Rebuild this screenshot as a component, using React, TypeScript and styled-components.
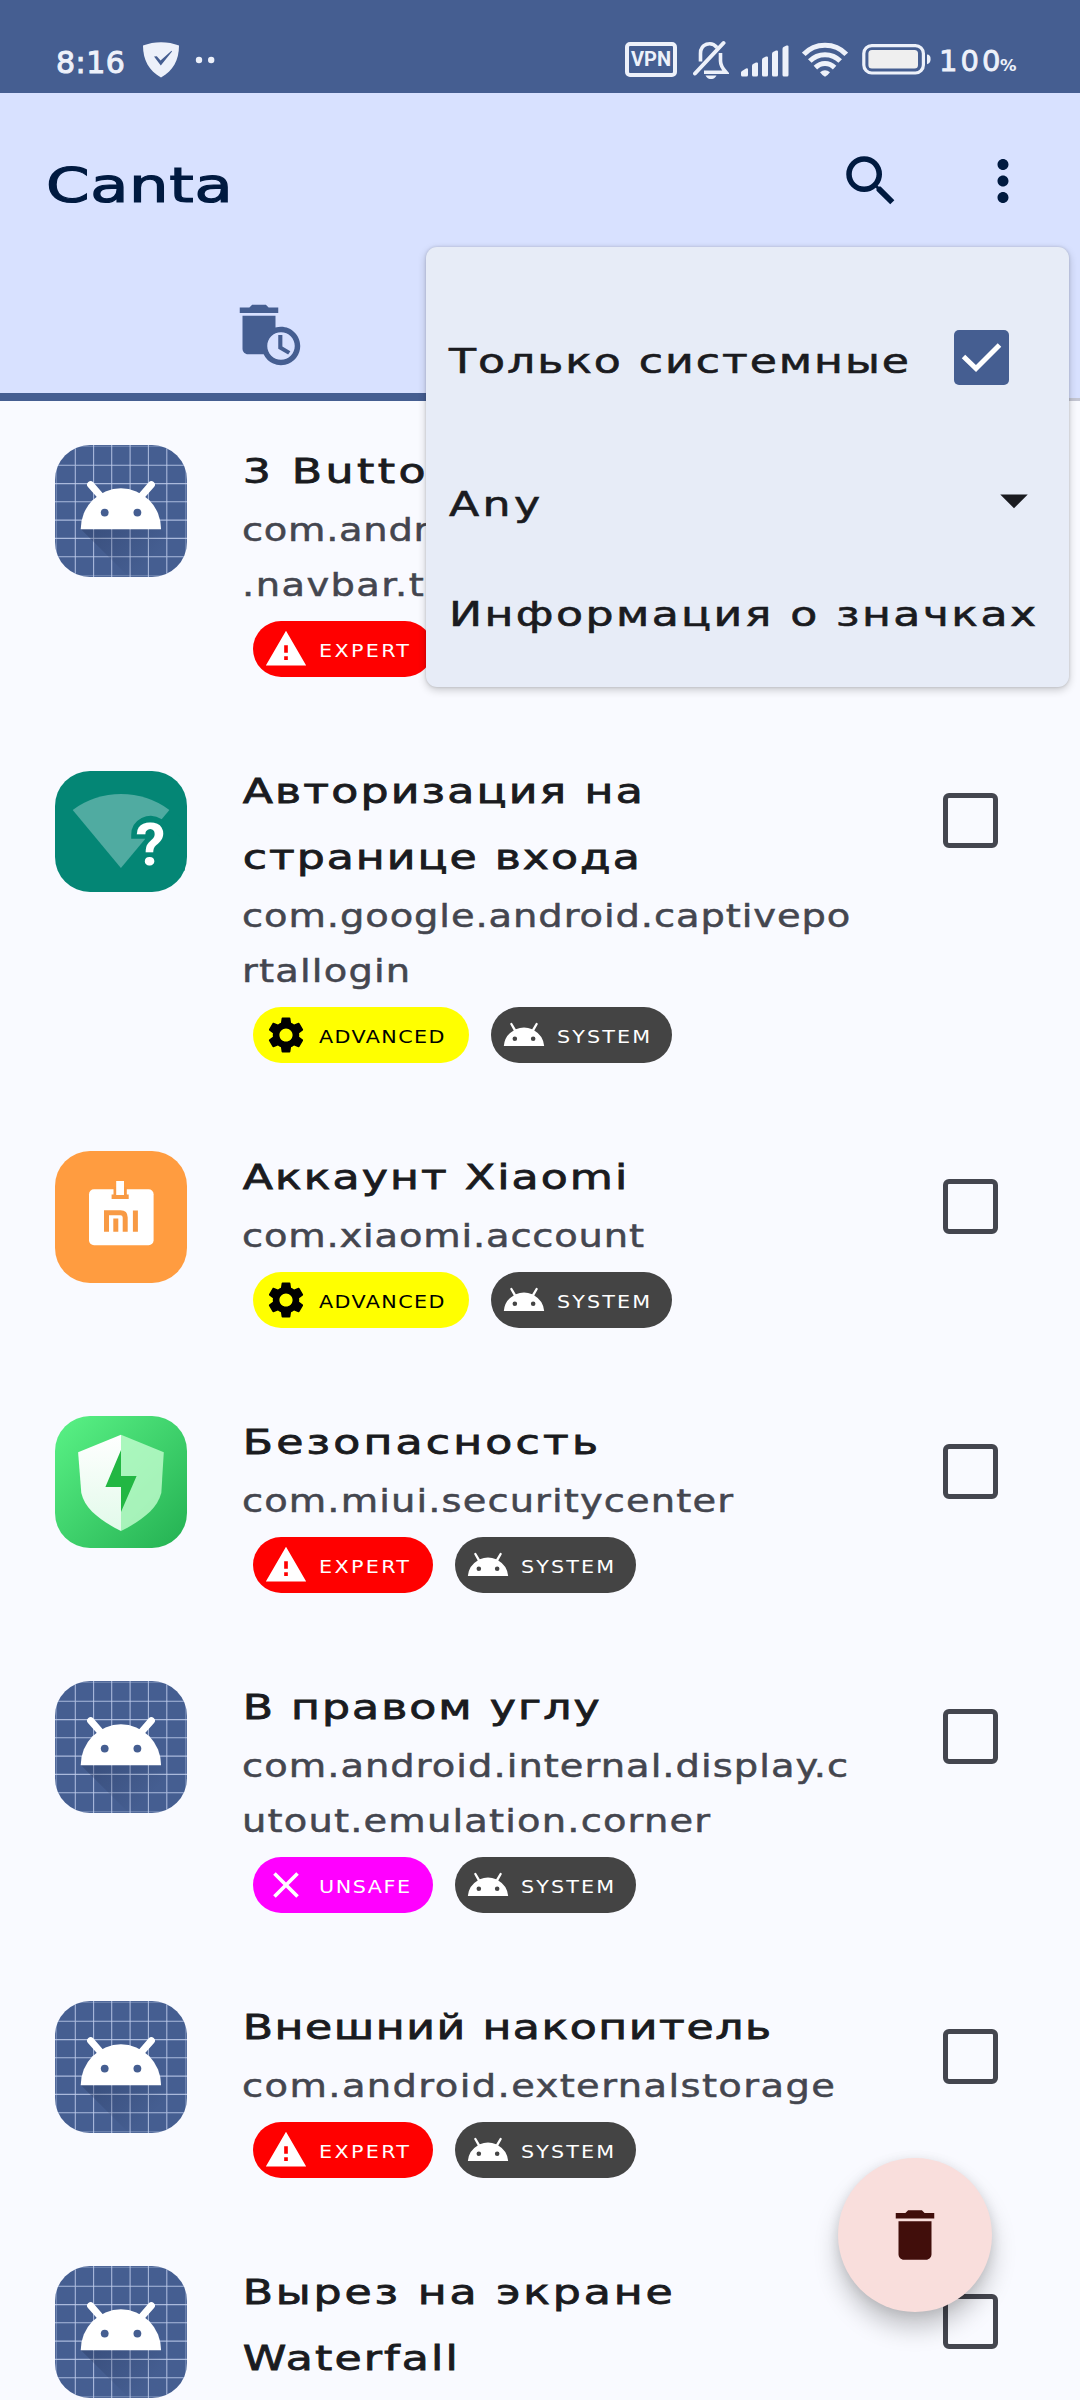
import React from 'react';
import styled, { createGlobalStyle } from 'styled-components';
import {
  MdAndroid,
  MdArrowDropDown,
  MdAutoDelete,
  MdClose,
  MdDelete,
  MdMoreVert,
  MdSearch,
  MdSettings,
  MdWarning,
} from 'react-icons/md';

const color = {
  primary: '#455e91',
  container: '#d8e1ff',
  onContainer: '#001a40',
  surface: '#f9faff',
  menu: '#e7ecf7',
  text: '#1a1b20',
  muted: '#44464f',
  status: '#edf1fa',
};

const GlobalStyle = createGlobalStyle`
  *, *::before, *::after { box-sizing: border-box; }
  html, body { margin: 0; background: ${color.surface}; }
  body { font-family: 'DejaVu Sans', Verdana, sans-serif; }
  svg { display: block; flex: none; }
`;

const Screen = styled.div`
  position: relative;
  width: 1080px;
  height: 2400px;
  overflow: hidden;
  display: flex;
  flex-direction: column;
  background: ${color.surface};
`;

/* Wide display lettering: stretched and tracked out */
const Wide = styled.span<{ $track: number; $stretch?: number; $rise?: number }>`
  display: block;
  width: max-content;
  white-space: pre;
  letter-spacing: ${(p) => p.$track}px;
  transform-origin: 0 50%;
  transform: translateY(${(p) => p.$rise ?? 0}px) scaleX(${(p) => p.$stretch ?? 1.3});
`;

/* ---------- status bar ---------- */

const StatusBar = styled.header`
  flex: none;
  height: 93px;
  padding: 25px 62px 0 56px;
  display: flex;
  align-items: center;
  justify-content: space-between;
  background: ${color.primary};
  color: ${color.status};
`;

const StatusGroup = styled.div`
  display: flex;
  align-items: center;
  height: 70px;
`;

const Clock = styled(Wide)`
  width: 86px;
  font-size: 30px;
  line-height: 40px;
  -webkit-text-stroke: 1px ${color.status};
`;

const Percent = styled.div`
  display: flex;
  align-items: baseline;
  width: 79px;
  margin-left: 7px;
  line-height: 40px;
`;

const PercentNumber = styled(Wide)`
  width: 61px;
  font-size: 29px;
  -webkit-text-stroke: 0.8px ${color.status};
`;

const PercentSign = styled(Wide)`
  font-size: 15px;
  font-weight: 700;
`;

const ShieldIcon = () => (
  <svg width="38" height="38" viewBox="0 0 38 38">
    <path d="M1 5.5C12 1 26 1 37 5.5C37 20 31 31 19 37.5C7 31 1 20 1 5.5Z" fill={color.status} />
    <path d="M12 16.5L14.8 16.2L18.5 20.5L29.5 10.8L30 11.5L18.8 25.5Z" fill={color.primary} />
  </svg>
);

const DotsIcon = () => (
  <svg width="20" height="8" viewBox="0 0 20 8" fill={color.status}>
    <circle cx="4" cy="4" r="3.2" />
    <circle cx="16.2" cy="4" r="3.2" />
  </svg>
);

const VpnBadge = styled.div`
  width: 52px;
  height: 35px;
  border: 4px solid ${color.status};
  border-radius: 5px;
  display: flex;
  align-items: center;
  justify-content: center;
  font: 700 20px/27px Roboto, 'Liberation Sans', sans-serif;
`;

const BellOffIcon = () => (
  <svg width="36" height="40" viewBox="0 0 36 40" fill="none" stroke={color.status} strokeWidth="3.6">
    <path d="M24 7.5C18 0.5 7.5 4 7.5 13.5V21.5" />
    <path d="M27.5 13V21C27.5 26 30 29 33 32.3H11" />
    <path d="M2 33.5L30.5 3" strokeWidth="4" strokeLinecap="round" />
    <path d="M12.5 35.5H23.5C22 38.6 19.5 39 18 39C16.5 39 14 38.6 12.5 35.5Z" fill={color.status} stroke="none" />
  </svg>
);

const SignalIcon = () => (
  <svg width="48" height="32" viewBox="0 0 48 32" fill={color.status}>
    <path d="M0 30V27.5Q0 26.5 1 26L5 23.5Q7 22.8 7 24.5V30Q7 31.5 5.5 31.5H1.5Q0 31.5 0 30Z" />
    <path d="M11 30V21Q11 19.5 12 19L15 17.6Q17 17 17 18.5V30Q17 31.5 15.5 31.5H12.5Q11 31.5 11 30Z" />
    <path d="M21 30V15Q21 13.5 22 13L25 11.6Q27 11 27 12.5V30Q27 31.5 25.5 31.5H22.5Q21 31.5 21 30Z" />
    <path d="M31 30V9Q31 7.5 32 7L35 5.6Q37 5 37 6.5V30Q37 31.5 35.5 31.5H32.5Q31 31.5 31 30Z" />
    <path d="M41.5 30V4Q41.5 2.5 42.5 2L45.5 0.6Q47.5 0 47.5 1.5V30Q47.5 31.5 46 31.5H43Q41.5 31.5 41.5 30Z" />
  </svg>
);

const WifiIcon = () => (
  <svg width="46" height="36" viewBox="0 0 46 36" fill="none" stroke={color.status} strokeWidth="5">
    <path d="M1.8 12.3C13 0.2 33 0.2 44.2 12.3" />
    <path d="M7.8 19C16 10.5 30 10.5 38.2 19" />
    <path d="M13.4 25.6C19 20.2 27 20.2 32.6 25.6" />
    <path d="M18 30.2Q23 26.5 28 30.2Q25.5 33.5 23 34.8Q20.5 33.5 18 30.2Z" fill={color.status} stroke="none" />
  </svg>
);

const BatteryIcon = () => (
  <svg width="70" height="32" viewBox="0 0 70 32">
    <rect x="1.8" y="2.6" width="59.6" height="27.4" rx="8" fill="none" stroke={color.status} strokeWidth="3.2" />
    <rect x="6.4" y="7" width="49.6" height="18.6" rx="3.5" fill="#efefef" />
    <path d="M65 11.5Q68.6 11.5 68.6 16T65 21.2Z" fill={color.status} />
  </svg>
);

const Spaced = styled.div<{ $before: number; $drop?: number }>`
  margin-left: ${(p) => p.$before}px;
  margin-top: ${(p) => p.$drop ?? 0}px;
`;

/* ---------- app bar and tabs ---------- */

const AppBar = styled.div`
  flex: none;
  height: 176px;
  padding: 0 44px 0 46px;
  display: flex;
  align-items: center;
  background: ${color.container};
  color: ${color.onContainer};
`;

const AppTitle = styled(Wide)`
  margin-right: auto;
  font-size: 48px;
  line-height: 66px;
  -webkit-text-stroke: 1.2px ${color.onContainer};
`;

const IconButton = styled.button`
  width: 132px;
  height: 132px;
  padding: 0;
  border: 0;
  background: none;
  color: inherit;
  display: flex;
  align-items: center;
  justify-content: center;
  &:last-child { margin-right: -33px; }
`;

const Tabs = styled.nav`
  flex: none;
  height: 132px;
  display: grid;
  grid-template-columns: 1fr 1fr;
  background: ${color.container};
  color: ${color.primary};
`;

const Tab = styled.div<{ $active?: boolean }>`
  display: flex;
  align-items: center;
  justify-content: center;
  box-shadow: inset 0 ${(p) => (p.$active ? `-8px ${color.primary}` : '-3px #c4c6d3')};
`;

/* ---------- app list ---------- */

const List = styled.main`
  display: flex;
  flex-direction: column;
`;

const Item = styled.article`
  flex: none;
  padding: 44px 82px 44px 55px;
  display: flex;
  align-items: flex-start;
`;

const IconSlot = styled.div`
  flex: none;
  width: 132px;
  height: 132px;
  margin-right: 55px;
  display: flex;
  align-items: center;
`;

const IconTile = styled.div<{ $fill: string; $height?: number }>`
  width: 132px;
  height: ${(p) => p.$height ?? 132}px;
  border-radius: 35px;
  overflow: hidden;
  background: ${(p) => p.$fill};
`;

const Details = styled.div`
  flex: 1;
  min-width: 0;
`;

const Name = styled(Wide)`
  padding-left: 0.5px;
  font-size: 34px;
  line-height: 66px;
  color: ${color.text};
  -webkit-text-stroke: 0.8px ${color.text};
`;

const Package = styled(Wide)`
  font-size: 32px;
  line-height: 55px;
  color: ${color.muted};
  -webkit-text-stroke: 0.5px ${color.muted};
`;

const Badges = styled.div`
  display: flex;
  gap: 22px;
  padding-left: 10.5px;
`;

const Badge = styled.div<{ $bg: string; $fg: string; $width: number }>`
  width: ${(p) => p.$width}px;
  height: 56px;
  padding-left: 11px;
  border-radius: 28px;
  display: flex;
  align-items: center;
  gap: 11px;
  background: ${(p) => p.$bg};
  color: ${(p) => p.$fg};
  font-size: 18px;
  line-height: 28px;
`;

const CheckBox = styled.div`
  flex: none;
  width: 55px;
  height: 55px;
  margin-top: 28px;
  border: 5px solid ${color.muted};
  border-radius: 6px;
`;

const AndroidArt = () => (
  <svg width="132" height="132" viewBox="0 0 132 132">
    <defs>
      <linearGradient id="cast" x1="40" y1="80" x2="85" y2="125" gradientUnits="userSpaceOnUse">
        <stop offset="0" stopColor="#26365c" stopOpacity="0.36" />
        <stop offset="1" stopColor="#26365c" stopOpacity="0" />
      </linearGradient>
    </defs>
    <g stroke="#c3cfee" strokeOpacity="0.8" strokeWidth="1.1">
      {[20.3, 38.6, 56.7, 75.1, 93.4, 111.8].map((v) => (
        <path key={v} d={`M${v} 0V132M0 ${v}H132`} />
      ))}
      <path d="M0 1.3H132M0 130.8H132M1.3 0V132M130.8 0V132" strokeOpacity="0.4" />
    </g>
    <path d="M26 84.3L74 132H132V110L106.3 84.3Z" fill="url(#cast)" />
    <g stroke="#fff" strokeWidth="7" strokeLinecap="round">
      <path d="M35.6 39.6L46 51.5M96.4 39.6L86 51.5" />
    </g>
    <path d="M25.7 84.3A40.2 41 0 0 1 106.1 84.3Z" fill="#fff" />
    <circle cx="49.7" cy="67.6" r="3.9" fill={color.primary} />
    <circle cx="82.4" cy="67.6" r="3.9" fill={color.primary} />
  </svg>
);

const PortalArt = () => (
  <svg width="132" height="121" viewBox="0 0 132 121">
    <path d="M65.9 97L17.7 39A81 81 0 0 1 114.4 39Z" fill="#50aba1" />
    <path d="M76.2 67.7V64A19.5 19 0 0 1 106.8 48.3L130 70V100H95L90.2 67.7Z" fill="#048675" />
    <text x="95.5" y="94" textAnchor="middle" fontFamily="Roboto, sans-serif" fontWeight="700" fontSize="60" fill="#fff">
      ?
    </text>
  </svg>
);

const MiArt = () => (
  <svg width="132" height="132" viewBox="0 0 132 132">
    <rect x="34" y="38.3" width="64.6" height="56" rx="5" fill="#fff" />
    <path d="M58.5 36H71.8V43.5H73.7V48H56.6V43.5H58.5Z" fill="#f89a44" />
    <rect x="61.2" y="30" width="7.8" height="14" fill="#fff" />
    <g fill="none" stroke="#f89a44" strokeWidth="5">
      <path d="M51.5 80.7V61.7H65.5Q70.2 61.7 70.2 66.5V80.7" />
      <path d="M60.8 80.7V67.5M80.4 80.7V59.5" />
    </g>
  </svg>
);

const SecurityArt = () => (
  <svg width="132" height="132" viewBox="0 0 132 132">
    <defs>
      <linearGradient id="shieldLeft" x1="0" y1="0" x2="0" y2="1">
        <stop offset="0" stopColor="#fff" />
        <stop offset="1" stopColor="#e2faea" />
      </linearGradient>
    </defs>
    <path d="M66 18.7L23.1 36.3L26.3 77C30 94 48 106 66 115Z" fill="url(#shieldLeft)" />
    <path d="M66 18.7L108.8 36.3L106.3 77C102 94 84 106 66 115Z" fill="#c6ffd2" fillOpacity="0.78" />
    <path d="M66 34L50.4 71H66V96L81.6 60H66Z" fill="#22b743" />
  </svg>
);

type Art = 'android' | 'portal' | 'mi' | 'security';

const AppIcon = ({ art }: { art: Art }) => (
  <IconSlot>
    {art === 'android' && <IconTile $fill={color.primary}><AndroidArt /></IconTile>}
    {art === 'portal' && <IconTile $fill="#048675" $height={121}><PortalArt /></IconTile>}
    {art === 'mi' && <IconTile $fill="#ff9c40"><MiArt /></IconTile>}
    {art === 'security' && (
      <IconTile $fill="linear-gradient(135deg, #58f084 4%, #26b354 96%)"><SecurityArt /></IconTile>
    )}
  </IconSlot>
);

const levels = {
  EXPERT: { bg: '#ff0000', fg: '#fff', width: 180, track: 2.03, Icon: MdWarning },
  ADVANCED: { bg: '#ffff00', fg: '#000', width: 216, track: 1.22, Icon: MdSettings },
  UNSAFE: { bg: '#ff00ff', fg: '#fff', width: 180, track: 1.35, Icon: MdClose },
  SYSTEM: { bg: '#444444', fg: '#fff', width: 181, track: 1.85, Icon: MdAndroid },
};

type Level = keyof typeof levels;
type Line = [text: string, track: number];

interface AppEntry {
  art: Art;
  name: Line[];
  pkg: Line[];
  level: Level;
}

const apps: AppEntry[] = [
  {
    art: 'android',
    name: [['3 Butto', 2.65]],
    pkg: [['com.andr', 0.6], ['.navbar.th', 1.2]],
    level: 'EXPERT',
  },
  {
    art: 'portal',
    name: [['Авторизация на', 1.67], ['странице входа', 1.54]],
    pkg: [['com.google.android.captivepo', 0.77], ['rtallogin', 1.0]],
    level: 'ADVANCED',
  },
  { art: 'mi', name: [['Аккаунт Xiaomi', 1.6]], pkg: [['com.xiaomi.account', 0.69]], level: 'ADVANCED' },
  { art: 'security', name: [['Безопасность', 2.45]], pkg: [['com.miui.securitycenter', 0.93]], level: 'EXPERT' },
  {
    art: 'android',
    name: [['В правом углу', 1.56]],
    pkg: [['com.android.internal.display.c', 0.87], ['utout.emulation.corner', 0.98]],
    level: 'UNSAFE',
  },
  {
    art: 'android',
    name: [['Внешний накопитель', 1.2]],
    pkg: [['com.android.externalstorage', 1.18]],
    level: 'EXPERT',
  },
  {
    art: 'android',
    name: [['Вырез на экране', 2.18], ['Waterfall', 1.65]],
    pkg: [],
    level: 'EXPERT',
  },
];

const LevelBadge = ({ level }: { level: Level }) => {
  const { bg, fg, width, track, Icon } = levels[level];
  return (
    <Badge $bg={bg} $fg={fg} $width={width}>
      <Icon size={44} />
      <Wide $track={track} $stretch={1.15} $rise={1.5}>{level}</Wide>
    </Badge>
  );
};

const AppItem = ({ app }: { app: AppEntry }) => (
  <Item>
    <AppIcon art={app.art} />
    <Details>
      {app.name.map(([text, track]) => (
        <Name key={text} $track={track} $rise={-7}>{text}</Name>
      ))}
      {app.pkg.map(([text, track]) => (
        <Package key={text} $track={track} $stretch={1.2} $rise={-8.5}>{text}</Package>
      ))}
      {app.pkg.length > 0 && (
        <Badges>
          <LevelBadge level={app.level} />
          <LevelBadge level="SYSTEM" />
        </Badges>
      )}
    </Details>
    <CheckBox />
  </Item>
);

/* ---------- overflow menu ---------- */

const Menu = styled.div`
  position: absolute;
  top: 247px;
  left: 426px;
  width: 643px;
  height: 440px;
  padding: 22px 0;
  display: flex;
  flex-direction: column;
  border-radius: 11px;
  background: ${color.menu};
  color: ${color.text};
  box-shadow: 0 3px 8px rgba(0, 0, 0, 0.2), 0 0 3px rgba(0, 0, 0, 0.16);
`;

const MenuRow = styled.div<{ $height: number; $end: number }>`
  height: ${(p) => p.$height}px;
  padding: 0 ${(p) => p.$end}px 0 23px;
  display: flex;
  align-items: center;
  justify-content: space-between;
`;

const MenuLabel = styled(Wide)`
  font-size: 34px;
  line-height: 66px;
  -webkit-text-stroke: 0.6px ${color.text};
`;

const CheckedBox = styled.div`
  width: 55px;
  height: 55px;
  border-radius: 5px;
  background: ${color.primary};
`;

/* ---------- floating button ---------- */

const Fab = styled.button`
  position: absolute;
  left: 838px;
  top: 2158px;
  width: 154px;
  height: 154px;
  padding: 0;
  border: 0;
  border-radius: 50%;
  display: flex;
  align-items: center;
  justify-content: center;
  background: #f9dedc;
  color: #410e0b;
  box-shadow: 0 16px 24px rgba(0, 0, 0, 0.22), 0 2px 12px rgba(0, 0, 0, 0.1);
`;

export default function App() {
  return (
    <Screen>
      <GlobalStyle />
      <StatusBar>
        <StatusGroup>
          <Clock $track={0.5} $stretch={1} $rise={4}>8:16</Clock>
          <ShieldIcon />
          <Spaced $before={15} $drop={2}><DotsIcon /></Spaced>
        </StatusGroup>
        <StatusGroup>
          <VpnBadge>VPN</VpnBadge>
          <Spaced $before={16} $drop={2}><BellOffIcon /></Spaced>
          <Spaced $before={12} $drop={3}><SignalIcon /></Spaced>
          <Spaced $before={13} $drop={1}><WifiIcon /></Spaced>
          <Spaced $before={14}><BatteryIcon /></Spaced>
          <Percent>
            <PercentNumber $track={3.05} $stretch={1} $rise={4}>100</PercentNumber>
            <PercentSign $track={0} $stretch={1.1} $rise={4}>%</PercentSign>
          </Percent>
        </StatusGroup>
      </StatusBar>

      <AppBar>
        <AppTitle $track={0.5} $rise={4}>Canta</AppTitle>
        <IconButton aria-label="Search"><MdSearch size={66} /></IconButton>
        <IconButton aria-label="More"><MdMoreVert size={66} /></IconButton>
      </AppBar>
      <Tabs>
        <Tab $active><MdAutoDelete size={66} /></Tab>
        <Tab />
      </Tabs>

      <List>
        {apps.map((app) => (
          <AppItem key={app.name[0][0]} app={app} />
        ))}
      </List>

      <Menu>
        <MenuRow $height={177} $end={60}>
          <MenuLabel $track={1.5} $rise={3}>Только системные</MenuLabel>
          <CheckedBox>
            <svg width="55" height="55" viewBox="0 0 55 55" fill="none" stroke="#fff" strokeWidth="5">
              <path d="M9.5 26.5L22 38.5L45.5 15" />
            </svg>
          </CheckedBox>
        </MenuRow>
        <MenuRow $height={107} $end={22}>
          <MenuLabel $track={2.6} $rise={4}>Any</MenuLabel>
          <MdArrowDropDown size={66} />
        </MenuRow>
        <MenuRow $height={112} $end={0}>
          <MenuLabel $track={1.85} $rise={5}>Информация о значках</MenuLabel>
        </MenuRow>
      </Menu>

      <Fab aria-label="Delete"><MdDelete size={66} /></Fab>
    </Screen>
  );
}
